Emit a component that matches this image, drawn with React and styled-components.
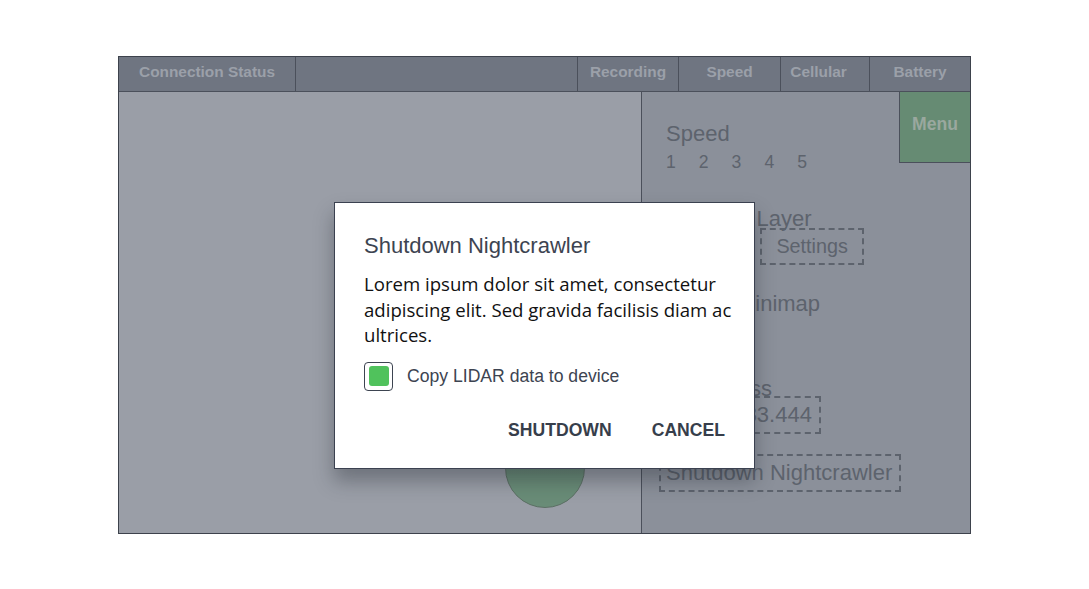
import React from "react";
import styled, { createGlobalStyle } from "styled-components";

const GlobalStyle = createGlobalStyle`
  body {
    margin: 0;
    background: #ffffff;
    font-family: "Liberation Sans", Arial, sans-serif;
  }
`;

const Page = styled.div`
  display: flex;
  justify-content: center;
  padding-top: 56px;
`;

const Frame = styled.div`
  position: relative;
  width: 853px;
  height: 478px;
  box-sizing: border-box;
  border: 1px solid #3d424c;
  display: flex;
  flex-direction: column;
`;

const Header = styled.div`
  display: flex;
  height: 35px;
  box-sizing: border-box;
  background: #6f7581;
  border-bottom: 1px solid #4b505b;
`;

const HeaderCell = styled.div`
  width: ${({ w }) => (w ? `${w}px` : "auto")};
  flex: ${({ w }) => (w ? "none" : "1")};
  box-sizing: border-box;
  border-right: ${({ last }) => (last ? "none" : "1px solid #4b505b")};
  display: flex;
  align-items: center;
  justify-content: center;
  padding: 0 ${({ shift }) => shift || 0}px 5px 0;
  font-size: 15.4px;
  font-weight: bold;
  color: #9ba0a9;
`;

const Body = styled.div`
  flex: 1;
  display: flex;
`;

const LeftPanel = styled.div`
  flex: none;
  width: 523px;
  box-sizing: border-box;
  border-right: 1px solid #4b505b;
  background: #9a9ea7;
  display: flex;
  align-items: flex-end;
  justify-content: flex-end;
  padding: 0 56px 25px 0;
`;

const RecordButton = styled.div`
  width: 80px;
  height: 80px;
  box-sizing: border-box;
  border-radius: 50%;
  border: 1px solid #5b6f63;
  background: linear-gradient(#66786f, #698c77 60%);
`;

const RightPanel = styled.div`
  flex: 1;
  min-width: 0;
  display: flex;
  background: #8b909a;
  color: #5d636d;
`;

const Controls = styled.div`
  flex: 1;
  min-width: 0;
  display: flex;
  flex-direction: column;
  align-items: flex-start;
  padding: 32px 0 0 24px;
  white-space: nowrap;
`;

const Label = styled.div`
  font-size: 22px;
  line-height: 20px;
  margin-top: ${({ mt }) => mt || 0}px;
`;

const Numbers = styled.div`
  display: flex;
  gap: 23px;
  font-size: 17.6px;
  line-height: 20px;
  margin-top: 8px;
`;

const ButtonRow = styled.div`
  display: flex;
  gap: 6px;
  margin: -1px 0 0 -14px;
`;

const DashedButton = styled.div`
  border: 2px dashed #5d636d;
  font-size: ${({ big }) => (big ? 22 : 19.8)}px;
  line-height: ${({ big }) => (big ? 26 : 23)}px;
  padding: ${({ big }) => (big ? "4px 7px 4px 5px" : "5px 14px")};
  margin-top: ${({ mt }) => mt || 0}px;
  margin-left: ${({ ml }) => ml || 0}px;
`;

const MenuBox = styled.div`
  flex: none;
  width: 71px;
  height: 71px;
  box-sizing: border-box;
  border-left: 1px solid #4b505b;
  border-bottom: 1px solid #4b505b;
  background: #668b73;
  color: #9aa89f;
  font-size: 17.6px;
  font-weight: bold;
  display: flex;
  justify-content: center;
  padding-top: 22px;
`;

const Overlay = styled.div`
  position: absolute;
  inset: 0;
  display: flex;
  justify-content: center;
  align-items: flex-start;
  padding-top: 145px;
`;

const Dialog = styled.div`
  width: 421px;
  box-sizing: border-box;
  background: #ffffff;
  border: 1px solid #3b4150;
  box-shadow: 0 12px 18px rgba(30, 34, 44, 0.35);
  padding: 30px 29px 28px 29px;
  display: flex;
  flex-direction: column;
`;

const DialogTitle = styled.div`
  font-size: 22px;
  line-height: 26px;
  color: #3d4451;
`;

const DialogText = styled.p`
  margin: 12px -14px 0 0;
  font-family: "Open Sans", "Noto Sans", sans-serif;
  font-size: 18.6px;
  line-height: 25.5px;
  color: #111111;
`;

const CheckRow = styled.label`
  display: flex;
  align-items: center;
  gap: 14px;
  margin-top: 14px;
  font-size: 17.6px;
  color: #3d4451;
`;

const Check = styled.span`
  width: 29px;
  height: 29px;
  box-sizing: border-box;
  border: 1.5px solid #3d4451;
  border-radius: 4px;
  display: flex;
  align-items: center;
  justify-content: center;
`;

const CheckFill = styled.span`
  width: 20px;
  height: 20px;
  border-radius: 3px;
  background: #50c25c;
`;

const Actions = styled.div`
  display: flex;
  justify-content: flex-end;
  gap: 40px;
  margin-top: 29px;
`;

const ActionButton = styled.button`
  border: none;
  background: none;
  padding: 0;
  font-family: "Liberation Sans", Arial, sans-serif;
  font-size: 17.6px;
  line-height: 20px;
  font-weight: bold;
  color: #373e4b;
`;

const headerCells = [
  { label: "Connection Status", w: 177 },
  { label: "", w: 0 },
  { label: "Recording", w: 101 },
  { label: "Speed", w: 102 },
  { label: "Cellular", w: 89, shift: 13 },
  { label: "Battery", w: 100, last: true },
];

export default function App() {
  return (
    <>
      <GlobalStyle />
      <Page>
        <Frame>
          <Header>
            {headerCells.map((c, i) => (
              <HeaderCell key={i} w={c.w} last={c.last} shift={c.shift}>
                {c.label}
              </HeaderCell>
            ))}
          </Header>
          <Body>
            <LeftPanel>
              <RecordButton />
            </LeftPanel>
            <RightPanel>
              <Controls>
                <Label>Speed</Label>
                <Numbers>
                  {[1, 2, 3, 4, 5].map((n) => (
                    <span key={n}>{n}</span>
                  ))}
                </Numbers>
                <Label mt={37}>Mapping Layer</Label>
                <ButtonRow>
                  <DashedButton>Satellite</DashedButton>
                  <DashedButton>Settings</DashedButton>
                </ButtonRow>
                <Label mt={29}>Toggle Minimap</Label>
                <Label mt={65}>IP Address</Label>
                <DashedButton big mt={-3} ml={-14}>192.168.33.444</DashedButton>
                <DashedButton big mt={20} ml={-7}>Shutdown Nightcrawler</DashedButton>
              </Controls>
              <MenuBox>Menu</MenuBox>
            </RightPanel>
          </Body>
          <Overlay>
            <Dialog>
              <DialogTitle>Shutdown Nightcrawler</DialogTitle>
              <DialogText>
                Lorem ipsum dolor sit amet, consectetur adipiscing elit. Sed
                gravida facilisis diam ac ultrices.
              </DialogText>
              <CheckRow>
                <Check>
                  <CheckFill />
                </Check>
                Copy LIDAR data to device
              </CheckRow>
              <Actions>
                <ActionButton>SHUTDOWN</ActionButton>
                <ActionButton>CANCEL</ActionButton>
              </Actions>
            </Dialog>
          </Overlay>
        </Frame>
      </Page>
    </>
  );
}
